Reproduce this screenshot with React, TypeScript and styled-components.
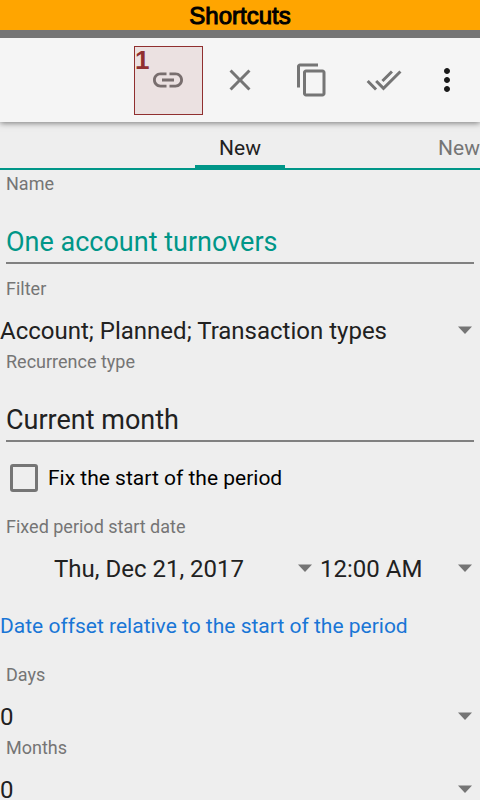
import React from "react";
import styled, { createGlobalStyle } from "styled-components";

const GlobalStyle = createGlobalStyle`
  *, *::before, *::after { box-sizing: border-box; }
  html { height: 100%; overflow: hidden; }
  body {
    height: 100%;
    margin: 0;
    overflow: hidden;
    background: #eeeeee;
    color: #212121;
    font-family: Roboto, sans-serif;
  }
`;

const Title = styled.h1`
  margin: 0;
  padding-top: 2px;
  border-bottom: 8px solid #757575;
  background: #ffa500;
  color: #000;
  font: 400 24px/28px "Liberation Sans", sans-serif;
  text-align: center;
  -webkit-text-stroke: 1px #000;
`;

const Toolbar = styled.div`
  position: relative;
  display: flex;
  justify-content: flex-end;
  height: 84px;
  padding-right: 6px;
  background: #f5f5f5;
  box-shadow: 0 1px 6px rgba(0, 0, 0, 0.5);
  clip-path: inset(0 0 -12px 0);
`;

const ToolButton = styled.button<{ $overflow?: boolean }>`
  position: relative;
  display: flex;
  align-items: center;
  justify-content: center;
  width: ${(p) => (p.$overflow ? 54 : 72)}px;
  padding: 0;
  border: 0;
  background: none;
  color: ${(p) => (p.$overflow ? "#1a1a1a" : "#757575")};
`;

const Callout = styled.span`
  position: absolute;
  inset: 8px 1px 7px 2px;
  border: 1px solid #902f2f;
  background: rgba(144, 47, 47, 0.1);
  color: #902f2f;
  font: 700 26px/26px "Liberation Sans", sans-serif;
  text-align: left;
`;

const Tabs = styled.div`
  display: grid;
  grid-template-columns: 1fr 90px 1fr;
  height: 48px;
  border-bottom: 2px solid #009688;
  overflow: hidden;
`;

const Tab = styled.button<{ $active?: boolean }>`
  grid-column: ${(p) => (p.$active ? 2 : 3)};
  justify-self: ${(p) => (p.$active ? "stretch" : "end")};
  padding: 9px 0 0;
  border: 0;
  border-bottom: 3px solid ${(p) => (p.$active ? "#009688" : "transparent")};
  background: none;
  color: ${(p) => (p.$active ? "#212121" : "#757575")};
  font: 400 21px/25px Roboto, sans-serif;
`;

const Form = styled.form`
  padding-top: 3px;
`;

const Label = styled.label`
  display: block;
  padding-left: 6px;
  color: #757575;
  font-size: 18px;
  line-height: 21px;
`;

const TextField = styled.div`
  display: flex;
  flex-direction: column;
`;

const TextInput = styled.input<{ $accent?: boolean }>`
  height: 70px;
  margin: 0 6px;
  padding: 28px 0 0;
  border: 0;
  border-bottom: 2px solid #808080;
  border-radius: 0;
  outline: 0;
  background: none;
  color: ${(p) => (p.$accent ? "#009688" : "#212121")};
  font: 400 27px/32px Roboto, sans-serif;
`;

const FilterField = styled.div`
  margin-top: 14px;
`;

const Picker = styled.div<{ $indent?: number }>`
  display: grid;
  grid-template-columns: 1fr 15px;
  align-items: center;
  height: 52px;
  padding: 12px 8px 0 ${(p) => p.$indent ?? 0}px;
`;

const Select = styled.select`
  grid-area: 1 / 1 / 2 / 3;
  width: 100%;
  height: 28px;
  margin: 0;
  padding: 0;
  border: 0;
  outline: 0;
  appearance: none;
  background: none;
  color: #212121;
  font: 400 24px/28px Roboto, sans-serif;
`;

const ArrowIcon = styled.svg`
  grid-area: 1 / 2;
  pointer-events: none;
`;

const CheckRow = styled.label`
  display: flex;
  align-items: center;
  gap: 10px;
  height: 72px;
  margin-bottom: 2px;
  padding: 0 10px;
  color: #000;
  font-size: 21px;
  line-height: 25px;
`;

const Checkbox = styled.input`
  appearance: none;
  width: 28px;
  height: 28px;
  margin: 0;
  border: 3px solid #757575;
  border-radius: 3px;

  &:checked {
    background: #009688;
  }
`;

const DateRow = styled.div`
  display: grid;
  grid-template-columns: 2fr 1fr;
`;

const OffsetLink = styled.a`
  display: block;
  margin: 25px 0;
  color: #1976d6;
  font-size: 21px;
  line-height: 25px;
  text-decoration: none;
`;

function Icon({ d }: { d: string }) {
  return (
    <svg width="36" height="36" viewBox="0 0 24 24" fill="currentColor" aria-hidden="true">
      <path d={d} />
    </svg>
  );
}

type DropDownProps = { id: string; value: string; indent?: number; label?: string };

function DropDown({ id, value, indent, label }: DropDownProps) {
  return (
    <Picker $indent={indent}>
      <Select id={id} aria-label={label}>
        <option>{value}</option>
      </Select>
      <ArrowIcon width="15" height="10" viewBox="0 0 15 10" fill="#757575" aria-hidden="true">
        <path d="M1 0.5h14l-7 7.5z" />
      </ArrowIcon>
    </Picker>
  );
}

export default function App() {
  return (
    <>
      <GlobalStyle />
      <Title>Shortcuts</Title>
      <Toolbar role="toolbar">
        <ToolButton aria-label="Create shortcut">
          <Icon d="M3.9 12c0-1.71 1.39-3.1 3.1-3.1h4V7H7c-2.76 0-5 2.24-5 5s2.24 5 5 5h4v-1.9H7c-1.71 0-3.1-1.39-3.1-3.1zM8 13h8v-2H8v2zm9-6h-4v1.9h4c1.71 0 3.1 1.39 3.1 3.1s-1.39 3.1-3.1 3.1h-4V17h4c2.76 0 5-2.24 5-5s-2.24-5-5-5z" />
          <Callout>1</Callout>
        </ToolButton>
        <ToolButton aria-label="Close">
          <Icon d="M19 6.41L17.59 5 12 10.59 6.41 5 5 6.41 10.59 12 5 17.59 6.41 19 12 13.41 17.59 19 19 17.59 13.41 12z" />
        </ToolButton>
        <ToolButton aria-label="Copy">
          <Icon d="M16 1H4c-1.1 0-2 .9-2 2v14h2V3h12V1zm3 4H8c-1.1 0-2 .9-2 2v14c0 1.1.9 2 2 2h11c1.1 0 2-.9 2-2V7c0-1.1-.9-2-2-2zm0 16H8V7h11v14z" />
        </ToolButton>
        <ToolButton aria-label="Apply">
          <Icon d="M18 7l-1.41-1.41-6.34 6.34 1.41 1.41L18 7zm4.24-1.41L11.66 16.17 7.48 12l-1.41 1.41L11.66 19l12-12-1.42-1.41zM.41 13.41L6 19l1.41-1.41L1.83 12 .41 13.41z" />
        </ToolButton>
        <ToolButton $overflow aria-label="More options">
          <Icon d="M12 8c1.1 0 2-.9 2-2s-.9-2-2-2-2 .9-2 2 .9 2 2 2zm0 2c-1.1 0-2 .9-2 2s.9 2 2 2 2-.9 2-2-.9-2-2-2zm0 6c-1.1 0-2 .9-2 2s.9 2 2 2 2-.9 2-2-.9-2-2-2z" />
        </ToolButton>
      </Toolbar>
      <Tabs role="tablist">
        <Tab $active role="tab" aria-selected="true">New</Tab>
        <Tab role="tab" aria-selected="false">New</Tab>
      </Tabs>
      <Form>
        <TextField>
          <Label htmlFor="name">Name</Label>
          <TextInput id="name" $accent defaultValue="One account turnovers" />
        </TextField>
        <FilterField>
          <Label htmlFor="filter">Filter</Label>
          <DropDown id="filter" value="Account; Planned; Transaction types" />
        </FilterField>
        <TextField>
          <Label htmlFor="recurrence">Recurrence type</Label>
          <TextInput id="recurrence" defaultValue="Current month" />
        </TextField>
        <CheckRow>
          <Checkbox type="checkbox" />
          Fix the start of the period
        </CheckRow>
        <Label htmlFor="date">Fixed period start date</Label>
        <DateRow>
          <DropDown id="date" value="Thu, Dec 21, 2017" indent={54} />
          <DropDown id="time" value="12:00 AM" label="Start time" />
        </DateRow>
        <OffsetLink href="#offset">Date offset relative to the start of the period</OffsetLink>
        <Label htmlFor="days">Days</Label>
        <DropDown id="days" value="0" />
        <Label htmlFor="months">Months</Label>
        <DropDown id="months" value="0" />
      </Form>
    </>
  );
}
